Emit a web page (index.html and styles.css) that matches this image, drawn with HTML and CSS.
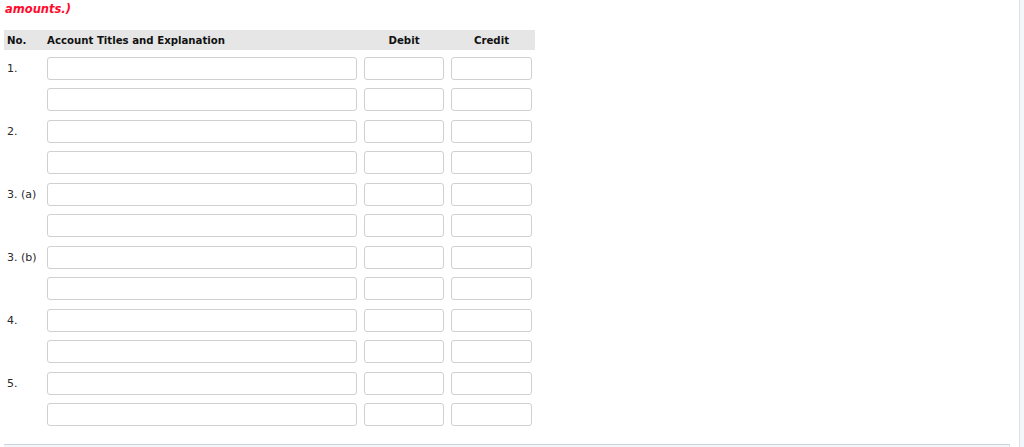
FILE: index.html
```html
<!DOCTYPE html>
<html lang="en">
<head>
  <meta charset="UTF-8" />
  <title>Journal Entries</title>
  <link rel="stylesheet" href="styles.css">
</head>
<body>
  <div class="page">
    <div class="content">
      <div class="note">amounts.)</div>

      <div class="journal">
        <div class="head">
          <div class="h-no">No.</div>
          <div>Account Titles and Explanation</div>
          <div class="h-amt">Debit</div>
          <div class="h-amt">Credit</div>
        </div>

        <div class="row">
          <div class="no">1.</div>
          <input class="acct" type="text"><input class="amt" type="text"><input class="amt" type="text">
        </div>
        <div class="row">
          <div class="no"></div>
          <input class="acct" type="text"><input class="amt" type="text"><input class="amt" type="text">
        </div>
        <div class="row">
          <div class="no">2.</div>
          <input class="acct" type="text"><input class="amt" type="text"><input class="amt" type="text">
        </div>
        <div class="row">
          <div class="no"></div>
          <input class="acct" type="text"><input class="amt" type="text"><input class="amt" type="text">
        </div>
        <div class="row">
          <div class="no">3. (a)</div>
          <input class="acct" type="text"><input class="amt" type="text"><input class="amt" type="text">
        </div>
        <div class="row">
          <div class="no"></div>
          <input class="acct" type="text"><input class="amt" type="text"><input class="amt" type="text">
        </div>
        <div class="row">
          <div class="no">3. (b)</div>
          <input class="acct" type="text"><input class="amt" type="text"><input class="amt" type="text">
        </div>
        <div class="row">
          <div class="no"></div>
          <input class="acct" type="text"><input class="amt" type="text"><input class="amt" type="text">
        </div>
        <div class="row">
          <div class="no">4.</div>
          <input class="acct" type="text"><input class="amt" type="text"><input class="amt" type="text">
        </div>
        <div class="row">
          <div class="no"></div>
          <input class="acct" type="text"><input class="amt" type="text"><input class="amt" type="text">
        </div>
        <div class="row">
          <div class="no">5.</div>
          <input class="acct" type="text"><input class="amt" type="text"><input class="amt" type="text">
        </div>
        <div class="row">
          <div class="no"></div>
          <input class="acct" type="text"><input class="amt" type="text"><input class="amt" type="text">
        </div>
      </div>

      <div class="next-box"></div>
    </div>
    <div class="side"></div>
  </div>
</body>
</html>
```

FILE: styles.css
```css
* {
  box-sizing: border-box;
}

body {
  margin: 0;
  font-family: 'DejaVu Sans', Verdana, sans-serif;
  font-size: 11px;
  color: #333;
  background: #fff;
  overflow: hidden;
}

.page {
  display: flex;
  height: 447px;
}

.content {
  width: 1019px;
  padding-left: 4px;
}

.side {
  flex: 1;
  border-left: 1px solid #dbe2ea;
  background: #f4f7fa;
}

.note {
  color: #ff0a2d;
  font-weight: bold;
  font-style: italic;
  font-size: 11.5px;
  padding: 2px 0 0 1px;
  height: 30px;
}

.journal {
  width: 531px;
}

.head,
.row {
  display: grid;
  grid-template-columns: 36px 310px 80px 81px;
  column-gap: 7px;
}

.head {
  background: #e6e6e6;
  height: 20px;
  align-items: center;
  font-size: 10.2px;
  font-weight: bold;
  color: #111;
  padding-right: 3px;
  margin-bottom: 6px;
}

.h-no {
  padding-left: 3px;
}

.h-amt {
  text-align: center;
}

.row {
  height: 31.5px;
  padding-top: 0.5px;
}

.no {
  padding: 5px 0 0 3px;
  white-space: nowrap;
  color: #2a2a2a;
}

.row input {
  height: 23px;
  border: 1px solid #d0d0d0;
  border-radius: 3px;
  background: #fff;
  font: inherit;
  padding: 2px 4px;
}

.next-box {
  margin-top: 10px;
  width: 1006px;
  height: 10px;
  border-top: 1px solid #c9d3dd;
  border-right: 1px solid #dbe2ea;
  background: #f4f7fa;
}
```
